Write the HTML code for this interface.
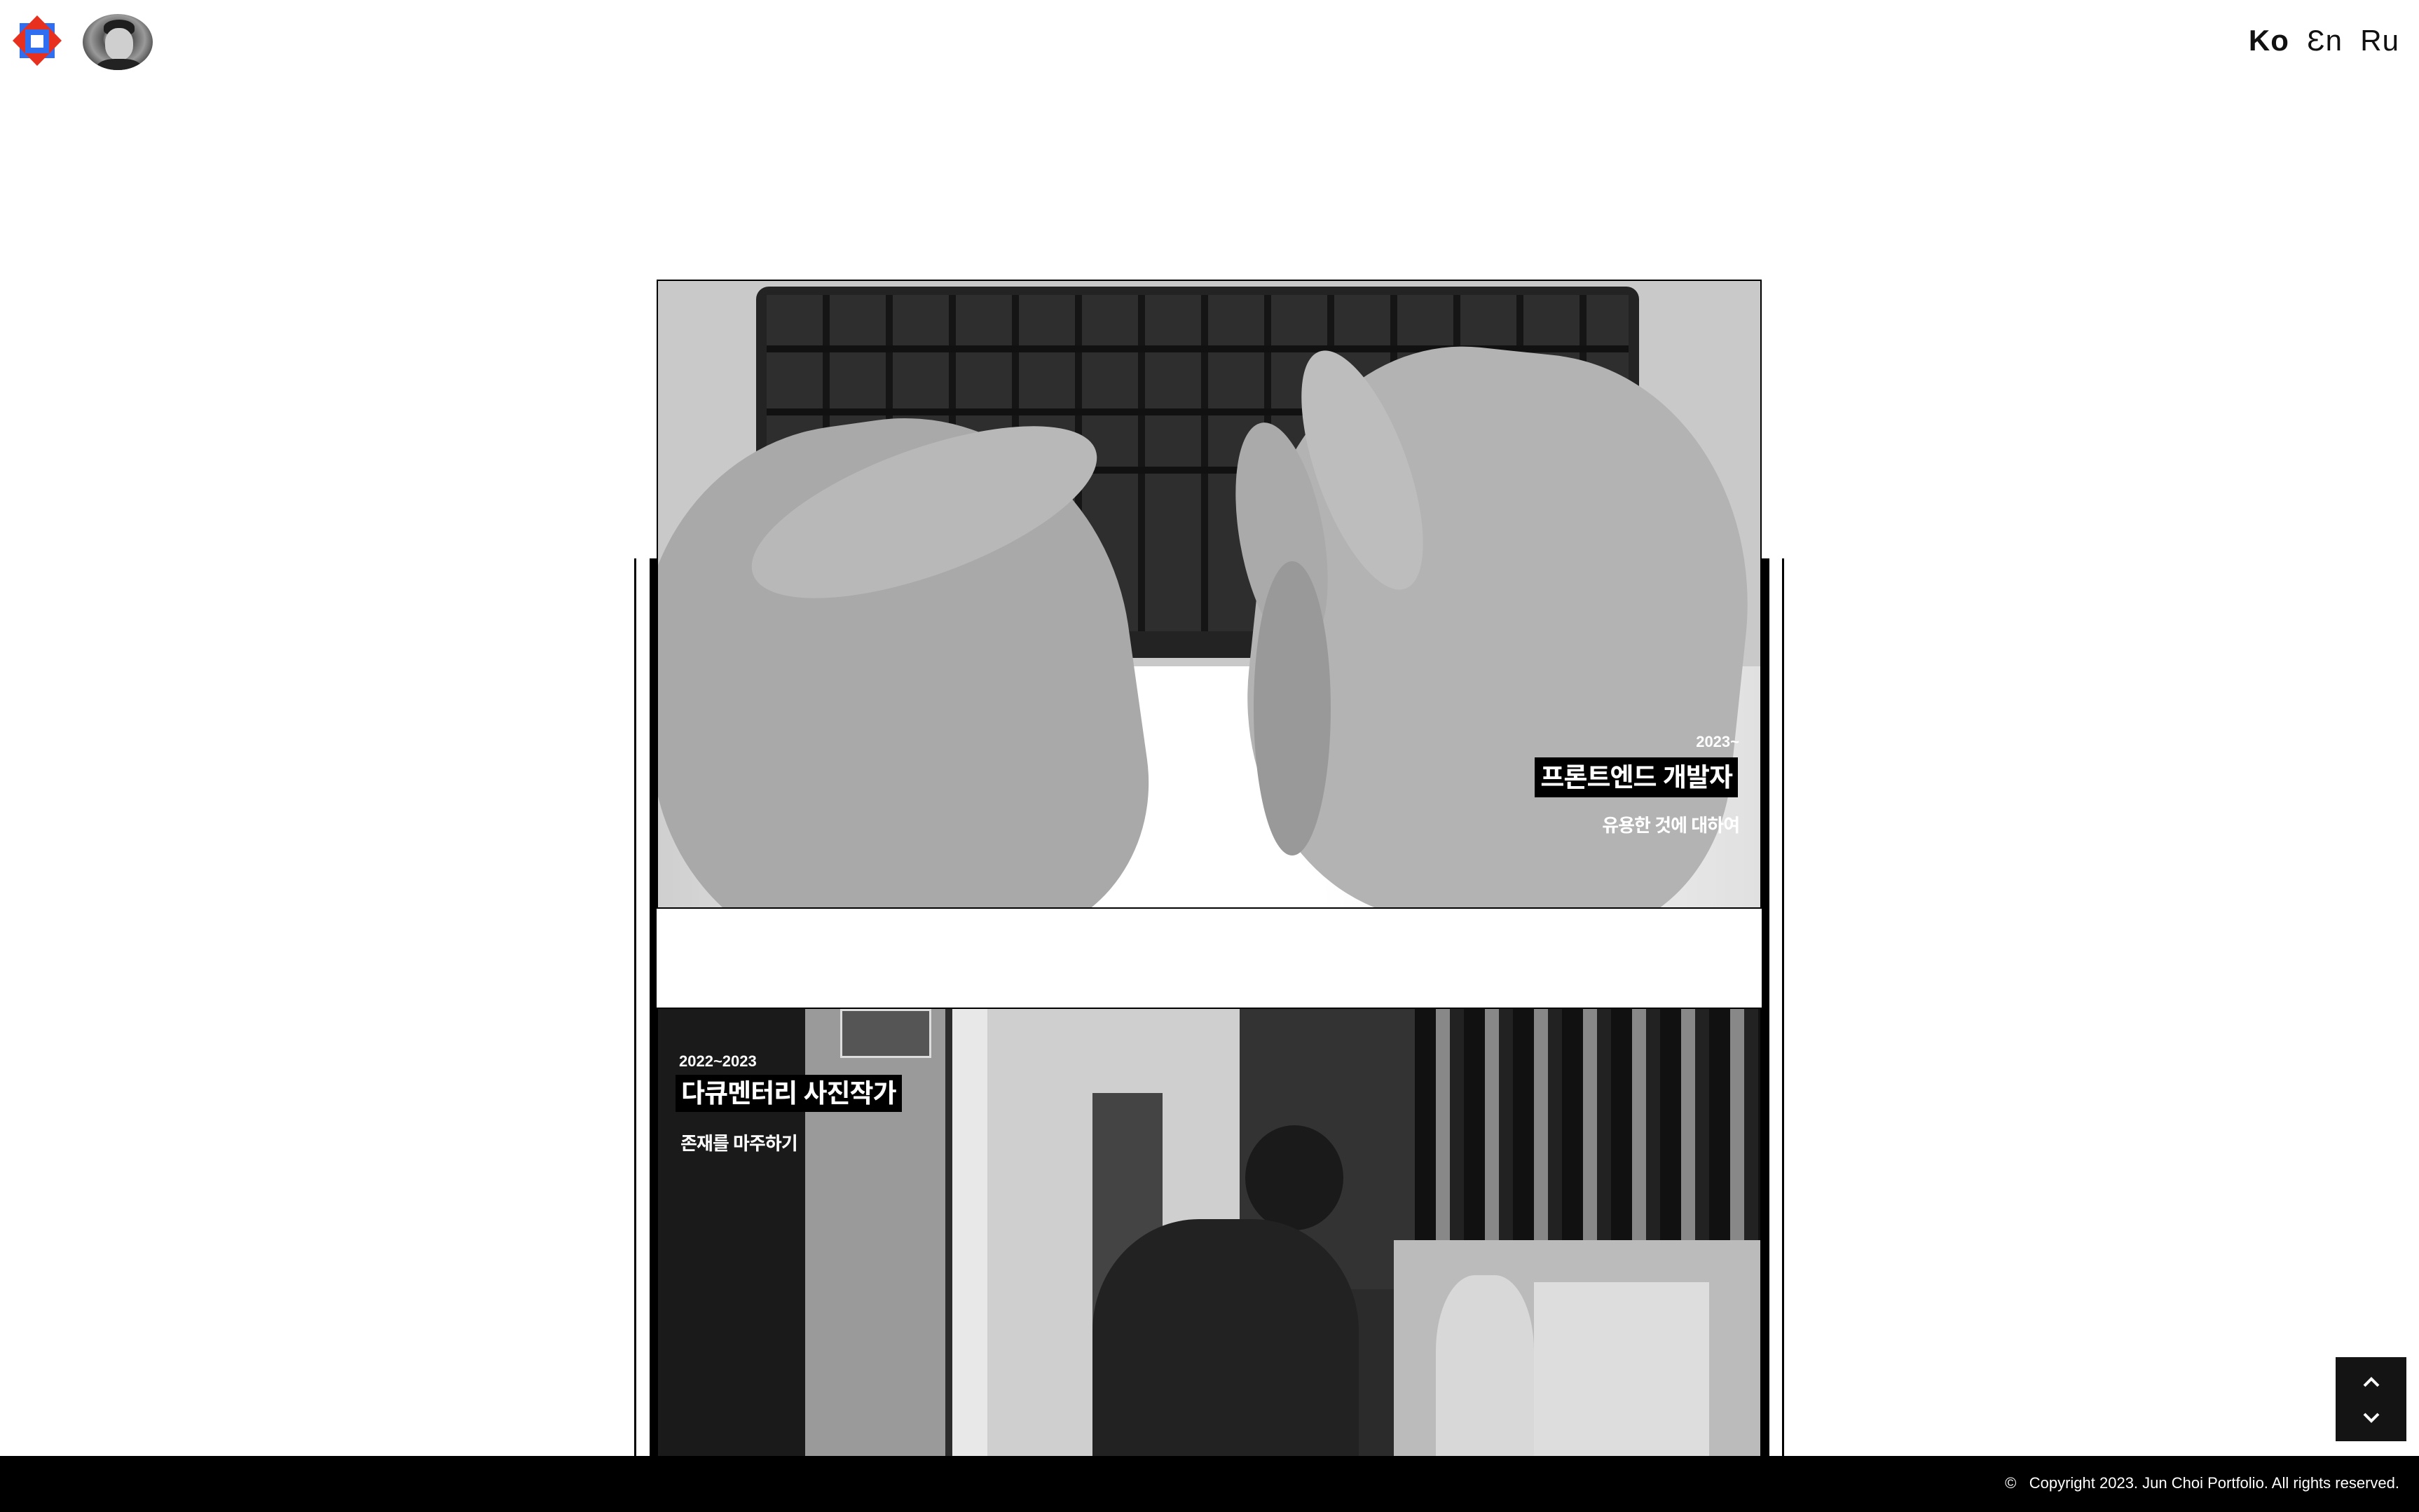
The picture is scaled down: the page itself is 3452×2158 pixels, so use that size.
<!DOCTYPE html>
<html><head><meta charset="utf-8"><style>
*{margin:0;padding:0;box-sizing:border-box}
html,body{width:3452px;height:2158px;overflow:hidden;background:#fff;font-family:"Liberation Sans","Noto Sans CJK KR",sans-serif}
.abs{position:absolute}
</style></head><body>
<svg class="abs" style="left:16px;top:20px" width="74" height="76" viewBox="0 0 74 76">
<rect x="12" y="13" width="50" height="50" fill="#2f6ef0"/>
<polygon points="37,2 72,38 37,74 2,38" fill="#e8301f"/>
<rect x="20" y="22" width="34" height="34" fill="#2f6ef0"/>
<rect x="28" y="30" width="18" height="18" fill="#fff"/>
</svg>
<div class="abs" style="left:118px;top:20px;width:100px;height:80px;border-radius:50%;overflow:hidden;background:radial-gradient(ellipse at 50% 45%,#d8d8d8 0 18%,#555 30%,#9a9a9a 55%,#3a3a3a 80%)">
<div class="abs" style="left:30px;top:8px;width:44px;height:22px;background:#1e1e1e;border-radius:50% 50% 30% 30%"></div>
<div class="abs" style="left:32px;top:20px;width:40px;height:46px;background:#cfcfcf;border-radius:45%"></div>
<div class="abs" style="left:20px;top:64px;width:64px;height:30px;background:#222;border-radius:40%"></div>
</div>
<div class="abs" style="right:28px;top:34px;font-size:42px;color:#111;letter-spacing:1px">
<b>Ko</b>&nbsp;&nbsp;<span style="font-weight:300">Ɛn</span>&nbsp;&nbsp;<span style="font-weight:300">Ru</span></div>

<div class="abs" style="left:905px;top:797px;width:3px;height:1290px;background:#000"></div>
<div class="abs" style="left:927px;top:797px;width:10px;height:1290px;background:#000"></div>
<div class="abs" style="left:2514px;top:797px;width:11px;height:1290px;background:#000"></div>
<div class="abs" style="left:2543px;top:797px;width:3px;height:1290px;background:#000"></div>

<div class="abs" style="left:937px;top:399px;width:1577px;height:898px;border:2px solid #000;overflow:hidden;background:#c9c9c9">
<div class="abs" style="left:0;top:550px;width:1577px;height:350px;background:linear-gradient(90deg,#cfcfcf,#fff 40%,#fff 60%,#e0e0e0)"></div>
<div class="abs" style="left:140px;top:8px;width:1260px;height:530px;background:#232323;border-radius:18px"></div>
<div class="abs" style="left:155px;top:20px;width:1230px;height:480px;background:repeating-linear-gradient(90deg,#2e2e2e 0 80px,#151515 80px 90px),#222"></div>
<div class="abs" style="left:155px;top:92px;width:1230px;height:10px;background:#111"></div>
<div class="abs" style="left:155px;top:182px;width:1230px;height:10px;background:#111"></div>
<div class="abs" style="left:155px;top:265px;width:1230px;height:10px;background:#111"></div>
<div class="abs" style="left:-20px;top:200px;width:700px;height:760px;background:#a9a9a9;border-radius:45% 45% 30% 40%;transform:rotate(-8deg)"></div>
<div class="abs" style="left:120px;top:240px;width:520px;height:180px;background:#b8b8b8;border-radius:50%;transform:rotate(-20deg)"></div>
<div class="abs" style="left:850px;top:100px;width:700px;height:820px;background:#b3b3b3;border-radius:40% 45% 30% 40%;transform:rotate(6deg)"></div>
<div class="abs" style="left:940px;top:90px;width:130px;height:360px;background:#bdbdbd;border-radius:50%;transform:rotate(-20deg)"></div>
<div class="abs" style="left:830px;top:200px;width:120px;height:330px;background:#aaa;border-radius:50%;transform:rotate(-10deg)"></div>
<div class="abs" style="left:850px;top:400px;width:110px;height:420px;background:#999;border-radius:50%"></div>
<div class="abs" style="right:30px;top:645px;color:#fff;font-size:22px;font-weight:bold">2023~</div>
<div class="abs" style="right:32px;top:680px;background:#000;color:#fff;font-size:37px;font-weight:bold;padding:4px 8px;line-height:49px;letter-spacing:-1px">프론트엔드 개발자</div>
<div class="abs" style="right:30px;top:757px;color:#fff;font-size:26px;font-weight:bold;letter-spacing:-1px">유용한 것에 대하여</div>
</div>

<div class="abs" style="left:937px;top:1438px;width:1577px;height:640px;border:2px solid #000;border-bottom:0;overflow:hidden;background:#2b2b2b">
<div class="abs" style="left:0;top:0;width:210px;height:640px;background:#1a1a1a"></div>
<div class="abs" style="left:210px;top:0;width:200px;height:640px;background:#9a9a9a"></div>
<div class="abs" style="left:260px;top:0;width:130px;height:70px;background:#555;border:3px solid #ddd"></div>
<div class="abs" style="left:420px;top:0;width:50px;height:640px;background:#e8e8e8"></div>
<div class="abs" style="left:470px;top:0;width:360px;height:640px;background:#cfcfcf"></div>
<div class="abs" style="left:830px;top:0;width:250px;height:400px;background:#333"></div>
<div class="abs" style="left:1080px;top:0;width:500px;height:330px;background:repeating-linear-gradient(90deg,#111 0 30px,#888 30px 50px,#222 50px 70px)"></div>
<div class="abs" style="left:1050px;top:330px;width:530px;height:310px;background:#bbb"></div>
<div class="abs" style="left:1250px;top:390px;width:250px;height:250px;background:#ddd"></div>
<div class="abs" style="left:620px;top:120px;width:100px;height:460px;background:#444"></div>
<div class="abs" style="left:838px;top:166px;width:140px;height:150px;background:#1a1a1a;border-radius:50%"></div>
<div class="abs" style="left:620px;top:300px;width:380px;height:400px;background:#222;border-radius:40% 40% 0 0"></div>
<div class="abs" style="left:1110px;top:380px;width:140px;height:270px;background:#d8d8d8;border-radius:40% 40% 0 0"></div>
<div class="abs" style="left:30px;top:62px;color:#fff;font-size:22px;font-weight:bold">2022~2023</div>
<div class="abs" style="left:25px;top:94px;background:#000;color:#fff;font-size:37px;font-weight:bold;padding:4px 8px;line-height:45px;letter-spacing:-1px">다큐멘터리 사진작가</div>
<div class="abs" style="left:32px;top:172px;color:#fff;font-size:26px;font-weight:bold;letter-spacing:-1px">존재를 마주하기</div>
</div>

<div class="abs" style="left:3333px;top:1937px;width:101px;height:120px;background:#141414">
<svg class="abs" style="left:36px;top:26px" width="30" height="20" viewBox="0 0 30 20"><path d="M5 15 L15 5 L25 15" stroke="#fff" stroke-width="4" fill="none"/></svg>
<svg class="abs" style="left:36px;top:76px" width="30" height="20" viewBox="0 0 30 20"><path d="M5 5 L15 15 L25 5" stroke="#fff" stroke-width="4" fill="none"/></svg>
</div>

<div class="abs" style="left:0;top:2078px;width:3452px;height:80px;background:#000"></div>
<div class="abs" style="right:28px;top:2104px;color:#fff;font-size:22px;font-family:'Liberation Sans',sans-serif">©&nbsp;&nbsp; Copyright 2023. Jun Choi Portfolio. All rights reserved.</div>
</body></html>
